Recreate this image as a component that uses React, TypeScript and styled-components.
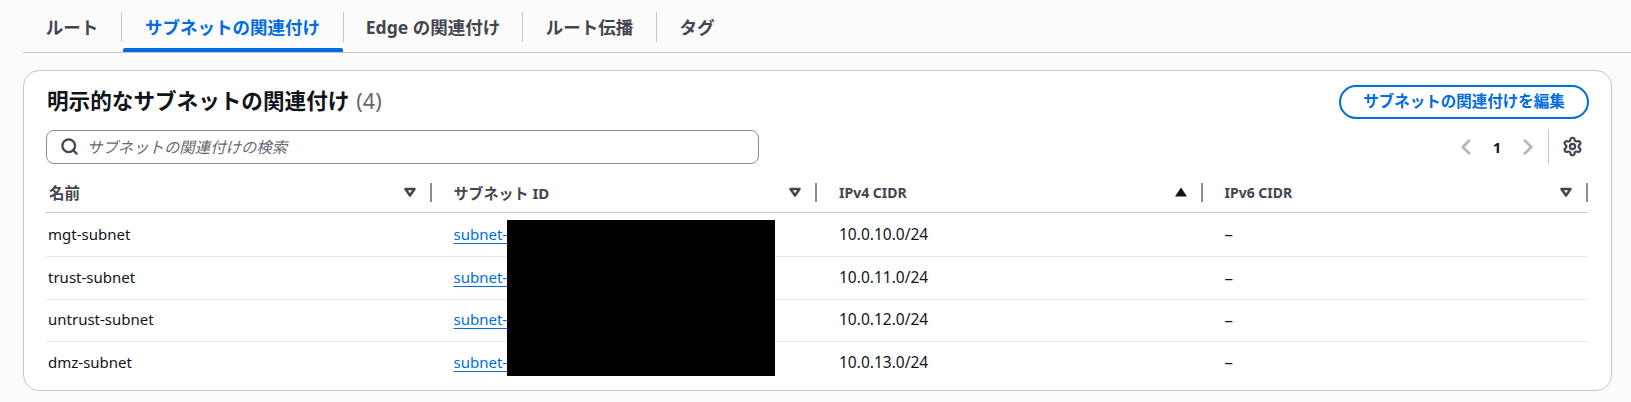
import React from "react";
import styled, { createGlobalStyle } from "styled-components";
import { ChevronLeft, ChevronRight, Search, Settings } from "lucide-react";

const Global = createGlobalStyle`
  html, body { margin: 0; padding: 0; background: #fbfbfb; }
  body { font-family: "Noto Sans", "Noto Sans CJK JP", sans-serif; color: #0f141a; }
`;
const Page = styled.div`
  width: 1631px; height: 402px; overflow: hidden; box-sizing: border-box; padding: 0 0 0 23px;
`;
const TabBar = styled.div`
  display: flex; height: 53px; box-sizing: border-box; border-bottom: 1px solid #c6c6cd; padding-top: 12px;
`;
const Tab = styled.div<{ $active?: boolean; $w: number; $last?: boolean }>`
  position: relative; width: ${p => p.$w}px; height: 30px; box-sizing: border-box; padding-bottom: 2px;
  display: flex; align-items: center; justify-content: center;
  border-right: ${p => (p.$last ? "none" : "1px solid #c6c6cd")};
  font-size: 17.5px; font-weight: 700; color: ${p => (p.$active ? "#006ce0" : "#424650")};
  ${p => p.$active && `&::after { content: ""; position: absolute; left: 1px; right: 0; top: 36px; height: 4px; background: #006ce0; border-radius: 2px 2px 0 0; }`}
`;
const Card = styled.section`
  width: 1589px; height: 321px; margin-top: 17px; box-sizing: border-box; background: #fff;
  border: 1px solid #c6c6cd; border-radius: 16px; padding: 14px 22px 0 22px; position: relative;
`;
const HeaderRow = styled.div`
  display: flex; justify-content: space-between; align-items: center; height: 34px;
`;
const Title = styled.h2`
  margin: 0 0 2px 1px; font-size: 21.6px; font-weight: 700; color: #0f141a; line-height: 30px;
`;
const Count = styled.span`
  font-weight: 400; color: #656871; margin-left: 7px;
`;
const EditButton = styled.button`
  width: 250px; height: 34px; box-sizing: border-box; background: #fff; border: 2px solid #006ce0; border-radius: 17px;
  font: 700 15.5px "Noto Sans", "Noto Sans CJK JP", sans-serif; color: #006ce0; padding: 0 0 3px;
`;
const ToolRow = styled.div`
  display: flex; justify-content: space-between; align-items: center; height: 35px; margin-top: 10px;
`;
const SearchBox = styled.div`
  width: 713px; height: 34px; box-sizing: border-box; border: 1px solid #8c8c94; border-radius: 8px;
  display: flex; align-items: center; gap: 8px; padding-left: 13px; color: #424650;
`;
const Placeholder = styled.span`
  font-size: 15.4px; font-style: italic; color: #656871;
`;
const Pager = styled.div`
  display: flex; align-items: center; height: 35px; padding-right: 6px;
`;
const PageNum = styled.span`
  font-size: 15px; font-weight: 700; width: 36px; text-align: center;
`;
const PagerSep = styled.div`
  width: 1px; height: 35px; background: #c6c6cd; margin: 0 13px 0 7px;
`;
const Grid = styled.div`
  display: grid; grid-template-columns: repeat(4, 1fr); width: 1542px;
`;
const HeadRow = styled(Grid)`
  height: 49px; box-sizing: border-box; border-bottom: 1px solid #c6c6cd; align-items: center; padding-top: 8px;
`;
const HeadCell = styled.div<{ $first?: boolean }>`
  display: flex; align-items: center; justify-content: space-between; height: 19px; box-sizing: border-box;
  padding-left: ${p => (p.$first ? 3 : 22)}px; padding-right: 14px; border-right: 2px solid #8c8c94;
  font-weight: 700; color: #424650;
`;
const HeadLabel = styled.span<{ $size: number }>`
  font-size: ${p => p.$size}px;
`;
const SortMark = styled.svg`
  width: 12px; height: 10px; display: block;
`;
const Body = styled.div`
  position: relative;
`;
const Row = styled(Grid)<{ $h: number; $last?: boolean; $lift: number }>`
  height: ${p => p.$h}px; box-sizing: border-box; align-items: center; padding-bottom: ${p => p.$lift}px;
  border-bottom: ${p => (p.$last ? "none" : "1px solid #e8e8ec")};
`;
const Cell = styled.div<{ $first?: boolean; $size?: number }>`
  padding-left: ${p => (p.$first ? 2 : 22)}px; font-size: ${p => p.$size ?? 15}px; color: #0f141a;
`;
const SubnetLink = styled.a`
  color: #006ce0; text-decoration: underline; text-underline-offset: 3px;
`;
const Redaction = styled.div`
  position: absolute; left: 461px; top: 7px; width: 268px; height: 156px; background: #000;
`;

const Sort = ({ up }: { up?: boolean }) =>
  up ? (
    <SortMark viewBox="0 0 12 10"><path d="M6 0.5 L12 9.5 H0 Z" fill="#0f141a" /></SortMark>
  ) : (
    <SortMark viewBox="0 0 12 10"><path d="M1.5 2 H10.5 L6 8.5 Z" fill="none" stroke="#424650" strokeWidth="2.5" strokeLinejoin="round" /></SortMark>
  );

const rows: [string, string, number, number][] = [
  ["mgt-subnet", "10.0.10.0/24", 44, 2],
  ["trust-subnet", "10.0.11.0/24", 43, 2],
  ["untrust-subnet", "10.0.12.0/24", 42, 3],
  ["dmz-subnet", "10.0.13.0/24", 43, 4],
];

export default function App() {
  return (
    <Page>
      <Global />
      <TabBar>
        <Tab $w={99}>ルート</Tab>
        <Tab $w={222} $active>サブネットの関連付け</Tab>
        <Tab $w={179}>Edge の関連付け</Tab>
        <Tab $w={134}>ルート伝播</Tab>
        <Tab $w={80} $last>タグ</Tab>
      </TabBar>
      <Card>
        <HeaderRow>
          <Title>明示的なサブネットの関連付け<Count>(4)</Count></Title>
          <EditButton>サブネットの関連付けを編集</EditButton>
        </HeaderRow>
        <ToolRow>
          <SearchBox>
            <Search size={19} strokeWidth={2.9} />
            <Placeholder>サブネットの関連付けの検索</Placeholder>
          </SearchBox>
          <Pager>
            <ChevronLeft size={26} color="#b4b4bb" strokeWidth={2.3} />
            <PageNum>1</PageNum>
            <ChevronRight size={26} color="#b4b4bb" strokeWidth={2.3} />
            <PagerSep />
            <Settings size={21} color="#424650" strokeWidth={2.5} />
          </Pager>
        </ToolRow>
        <HeadRow>
          <HeadCell $first><HeadLabel $size={15.5}>名前</HeadLabel><Sort /></HeadCell>
          <HeadCell><HeadLabel $size={15}>サブネット ID</HeadLabel><Sort /></HeadCell>
          <HeadCell><HeadLabel $size={14}>IPv4 CIDR</HeadLabel><Sort up /></HeadCell>
          <HeadCell><HeadLabel $size={14}>IPv6 CIDR</HeadLabel><Sort /></HeadCell>
        </HeadRow>
        <Body>
          {rows.map(([name, cidr, h, lift], i) => (
            <Row key={name} $h={h} $lift={lift} $last={i === rows.length - 1}>
              <Cell $first>{name}</Cell>
              <Cell><SubnetLink href="#">subnet-</SubnetLink></Cell>
              <Cell $size={15.5}>{cidr}</Cell>
              <Cell $size={17}>–</Cell>
            </Row>
          ))}
          <Redaction />
        </Body>
      </Card>
    </Page>
  );
}
